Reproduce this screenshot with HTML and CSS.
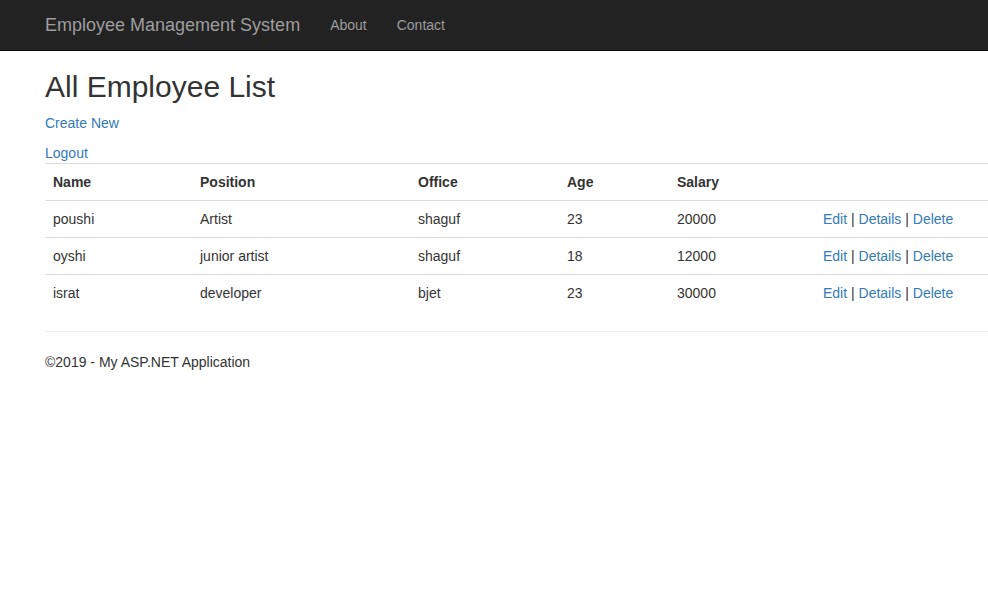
FILE: index.html
```html
<!DOCTYPE html>
<html>
<head>
<meta charset="utf-8">
<title>All Employee List</title>
<link rel="stylesheet" href="styles.css">
</head>
<body>
<header class="navbar">
  <a class="brand" href="#">Employee Management System</a>
  <nav class="nav">
    <a href="#">About</a>
    <a href="#">Contact</a>
  </nav>
</header>
<main class="content">
  <h2 class="title">All Employee List</h2>
  <p class="line"><a href="#">Create New</a></p>
  <div class="line"><a href="#">Logout</a></div>
  <table class="table">
    <colgroup>
      <col class="c1"><col class="c2"><col class="c3"><col class="c4"><col class="c5"><col class="c6">
    </colgroup>
    <tr>
      <th>Name</th><th>Position</th><th>Office</th><th>Age</th><th>Salary</th><th></th>
    </tr>
    <tr>
      <td>poushi</td><td>Artist</td><td>shaguf</td><td>23</td><td>20000</td>
      <td><a href="#">Edit</a> | <a href="#">Details</a> | <a href="#">Delete</a></td>
    </tr>
    <tr>
      <td>oyshi</td><td>junior artist</td><td>shaguf</td><td>18</td><td>12000</td>
      <td><a href="#">Edit</a> | <a href="#">Details</a> | <a href="#">Delete</a></td>
    </tr>
    <tr>
      <td>israt</td><td>developer</td><td>bjet</td><td>23</td><td>30000</td>
      <td><a href="#">Edit</a> | <a href="#">Details</a> | <a href="#">Delete</a></td>
    </tr>
  </table>
  <hr class="rule">
  <footer class="footer">
    <p>&copy;2019 - My ASP.NET Application</p>
  </footer>
</main>
</body>
</html>
```

FILE: styles.css
```css
* { box-sizing: border-box; }
html, body { margin: 0; padding: 0; }
body {
  font-family: "Liberation Sans", Arial, Helvetica, sans-serif;
  font-size: 14px;
  line-height: 20px;
  color: #333;
  background: #fff;
}
a { color: #337ab7; text-decoration: none; }

.navbar {
  height: 51px;
  background: #222;
  border-bottom: 1px solid #080808;
  display: flex;
  align-items: flex-start;
  padding-left: 30px;
}
.brand {
  display: block;
  padding: 15px 15px;
  font-size: 18px;
  line-height: 20px;
  color: #9d9d9d;
}
.nav { display: flex; }
.nav a {
  display: block;
  padding: 15px 15px;
  line-height: 20px;
  color: #9d9d9d;
}

.content {
  padding-left: 45px;
}
.title {
  margin: 19px 0 10px;
  font-size: 30px;
  line-height: 33px;
  font-weight: 500;
}
.line { margin: 0 0 10px; }
div.line { margin-bottom: 0; }

.table {
  width: 100%;
  border-collapse: collapse;
  border-spacing: 0;
  margin-bottom: 20px;
}
.c1 { width: 147px; }
.c2 { width: 218px; }
.c3 { width: 149px; }
.c4 { width: 110px; }
.c5 { width: 146px; }
.table th, .table td {
  padding: 8px;
  line-height: 20px;
  text-align: left;
  vertical-align: top;
  border-top: 1px solid #ddd;
}
.table th { font-weight: bold; }

.rule {
  margin: 0 0 20px;
  border: 0;
  border-top: 1px solid #eee;
}
.footer p { margin: 0 0 10px; }
```
